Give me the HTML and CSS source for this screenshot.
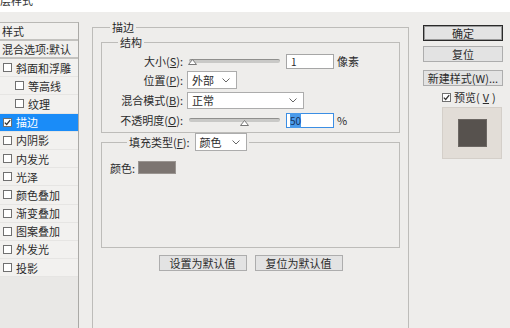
FILE: index.html
```html
<!DOCTYPE html>
<html lang="zh-CN">
<head>
    <meta charset="UTF-8">
    <title>图层样式</title>
    <link rel="stylesheet" href="styles.css">
</head>
<body>

    <div class="titlebar"><span>层样式</span></div>

    <div class="dialog">
        <aside class="style-list">
            <div class="head">样式</div>
            <div class="blend">混合选项:默认</div>
            <div class="item"><span class="check"></span>斜面和浮雕</div>
            <div class="item sub"><span class="check"></span>等高线</div>
            <div class="item sub"><span class="check"></span>纹理</div>
            <div class="item on"><span class="check"><svg width="7" height="7" viewBox="0 0 7 7"><path d="M0.8 3.6 L2.7 5.5 L6.2 1.2" fill="none" stroke="#333" stroke-width="1.3"/></svg></span>描边</div>
            <div class="item"><span class="check"></span>内阴影</div>
            <div class="item"><span class="check"></span>内发光</div>
            <div class="item"><span class="check"></span>光泽</div>
            <div class="item"><span class="check"></span>颜色叠加</div>
            <div class="item"><span class="check"></span>渐变叠加</div>
            <div class="item"><span class="check"></span>图案叠加</div>
            <div class="item"><span class="check"></span>外发光</div>
            <div class="item"><span class="check"></span>投影</div>
        </aside>

        <main class="panel">
            <fieldset class="group outer">
                <legend>描边</legend>

                <fieldset class="group struct">
                    <legend>结构</legend>
                    <div class="form-row">
                        <label>大小(<u>S</u>):</label>
                        <div class="controls">
                            <div class="slider"><div class="track"></div><svg class="thumb at-min" width="9" height="6" viewBox="0 0 9 6"><path d="M4.5 0.5 L8.5 5.5 L0.5 5.5 Z" fill="#fff" stroke="#777"/></svg></div>
                            <div class="field">1</div>
                            <span class="unit">像素</span>
                        </div>
                    </div>
                    <div class="form-row">
                        <label>位置(<u>P</u>):</label>
                        <div class="controls">
                            <div class="select short"><span>外部</span><svg width="8" height="5" viewBox="0 0 8 5"><path d="M0.5 0.5 L4 4 L7.5 0.5" fill="none" stroke="#666"/></svg></div>
                        </div>
                    </div>
                    <div class="form-row">
                        <label>混合模式(<u>B</u>):</label>
                        <div class="controls">
                            <div class="select wide"><span>正常</span><svg width="8" height="5" viewBox="0 0 8 5"><path d="M0.5 0.5 L4 4 L7.5 0.5" fill="none" stroke="#666"/></svg></div>
                        </div>
                    </div>
                    <div class="form-row">
                        <label>不透明度(<u>O</u>):</label>
                        <div class="controls">
                            <div class="slider"><div class="track"></div><svg class="thumb at-half" width="9" height="6" viewBox="0 0 9 6"><path d="M4.5 0.5 L8.5 5.5 L0.5 5.5 Z" fill="#fff" stroke="#777"/></svg></div>
                            <div class="field focus"><span class="sel">50</span></div>
                            <span class="unit">%</span>
                        </div>
                    </div>
                </fieldset>

                <fieldset class="group fill">
                    <legend>
                        <label>填充类型(<u>F</u>):</label>
                        <div class="select fill-type"><span>颜色</span><svg width="8" height="5" viewBox="0 0 8 5"><path d="M0.5 0.5 L4 4 L7.5 0.5" fill="none" stroke="#666"/></svg></div>
                    </legend>
                    <div class="color-row">
                        <span>颜色:</span>
                        <span class="swatch"></span>
                    </div>
                </fieldset>

                <div class="defaults">
                    <button>设置为默认值</button>
                    <button>复位为默认值</button>
                </div>
            </fieldset>
        </main>

        <div class="actions">
            <button class="primary">确定</button>
            <button class="reset">复位</button>
            <button class="new-style">新建样式(W)...</button>
            <div class="preview-check"><span class="check"><svg width="7" height="7" viewBox="0 0 7 7"><path d="M0.8 3.6 L2.7 5.5 L6.2 1.2" fill="none" stroke="#333" stroke-width="1.3"/></svg></span>预览(<u>V</u>)</div>
            <div class="preview"><div class="preview-square"></div></div>
        </div>
    </div>

</body>
</html>
```

FILE: styles.css
```css
* {
    box-sizing: border-box;
}
body {
    margin: 0;
    width: 510px;
    height: 328px;
    overflow: hidden;
    background: #eeedeb;
    font-family: "Noto Sans CJK SC", "Noto Sans", sans-serif;
    font-size: 11px;
    color: #2b2b2b;
}
u {
    text-decoration: underline;
}
.titlebar {
    height: 12px;
    background: #fff;
    overflow: hidden;
}
.titlebar span {
    display: block;
    margin-top: -7px;
    font-size: 11px;
    line-height: 14px;
    color: #333;
}
.dialog {
    display: flex;
    height: 316px;
    overflow: hidden;
}

/* left list */
.style-list {
    width: 79px;
    flex: none;
    margin-top: 10px;
    border-top: 1px solid #b9b8b5;
    border-right: 1px solid #aaa9a6;
    background: #e9e8e6;
    overflow: hidden;
}
.head,
.blend {
    height: 18px;
    line-height: 16px;
    padding-left: 2px;
    background: #f1f0ee;
    border-bottom: 2px solid #c3c2bf;
    white-space: nowrap;
}
.item {
    height: 18.2px;
    display: flex;
    align-items: center;
    gap: 4px;
    padding-left: 3px;
    background: #f2f1ef;
    border-bottom: 1px solid #e6e5e3;
    white-space: nowrap;
}
.item.sub {
    padding-left: 15px;
}
.item.on {
    background: #1a8cf8;
    color: #fff;
}
.check {
    width: 9px;
    height: 9px;
    flex: none;
    border: 1px solid #707070;
    background: #fff;
    display: flex;
    align-items: center;
    justify-content: center;
}

/* main panel */
.panel {
    margin-left: 13px;
    padding-top: 9px;
    width: 317px;
    flex: none;
}
fieldset.group {
    margin: 0;
    min-width: 0;
    border: 1px solid #bdbcb9;
}
fieldset.group > legend {
    padding: 0 2px;
    line-height: 13px;
}
.outer {
    height: 320px;
    padding: 2px 8px 0 8px;
}
.outer > legend {
    margin-left: 9px;
}
.struct {
    padding: 3px 8px 2px 8px;
}
.struct > legend {
    margin-left: 8px;
}
.form-row {
    display: grid;
    grid-template-columns: 73px 1fr;
    column-gap: 4px;
    align-items: center;
    height: 20px;
}
.form-row:first-of-type {
    height: 18px;
}
.form-row > label {
    text-align: right;
    white-space: nowrap;
}
.controls {
    display: flex;
    align-items: center;
}
.slider {
    position: relative;
    width: 91px;
    height: 12px;
    margin-left: 2px;
    display: flex;
    align-items: center;
}
.track {
    width: 100%;
    height: 4px;
    border-radius: 2px;
    background: #c9c9c7;
    border-top: 1px solid #8f8f8d;
}
.thumb {
    position: absolute;
    top: 6px;
}
.thumb.at-min {
    left: -1px;
    top: 4px;
}
.thumb.at-half {
    left: 51px;
}
.field {
    width: 48px;
    height: 15px;
    margin-left: 6px;
    padding-left: 4px;
    border: 1px solid #a6a6a6;
    background: #fff;
    font-size: 10px;
    line-height: 13px;
}
.field.focus {
    border-color: #3b8ee4;
    padding-left: 3px;
}
.sel {
    background: #4a9beb;
    color: #17345e;
}
.unit {
    margin-left: 3px;
}
.select {
    height: 18px;
    display: flex;
    align-items: center;
    justify-content: space-between;
    padding: 0 6px 0 4px;
    border: 1px solid #acacac;
    background: #fff;
}
.select.short {
    width: 50px;
}
.select.wide {
    width: 117px;
    height: 17px;
}

/* fill type group */
.fill {
    margin: 5px 1px 0 1px;
    padding: 10px 8px 73px 8px;
}
.fill > legend {
    margin-left: 17px;
    display: flex;
    align-items: center;
    gap: 5px;
    line-height: 18px;
}
.select.fill-type {
    width: 52px;
}
.color-row {
    display: flex;
    align-items: center;
    height: 13px;
}
.swatch {
    width: 38px;
    height: 13px;
    margin-left: 3px;
    background: #7c7571;
    border: 1px solid #9a9591;
}
.defaults {
    display: flex;
    justify-content: center;
    gap: 8px;
    margin-top: 7px;
}
button {
    font-family: inherit;
    font-size: 11px;
    color: #2b2b2b;
    height: 16px;
    padding: 0;
    line-height: 14px;
    border: 1px solid #adadad;
    background: #e3e3e3;
    border-radius: 0;
}
.defaults button {
    width: 88px;
}

/* right column */
.actions {
    width: 80px;
    flex: none;
    margin-left: 14px;
    margin-top: 13px;
    display: flex;
    flex-direction: column;
}
.actions button {
    width: 80px;
}
.actions .primary {
    border-color: #2a2a2a;
    box-shadow: inset 0 0 0 1px #9a9a9a;
}
.actions .reset {
    margin-top: 5px;
}
.actions .new-style {
    margin-top: 8px;
}
.preview-check {
    display: flex;
    align-items: center;
    gap: 3px;
    margin-top: 4px;
    margin-left: 19px;
    height: 14px;
}
.preview {
    width: 60px;
    height: 52px;
    margin-top: 3px;
    margin-left: 19px;
    background: #e2ddd7;
    border: 1px solid #d4cfc9;
    display: flex;
    align-items: center;
    justify-content: center;
}
.preview-square {
    width: 29px;
    height: 28px;
    background: #57524e;
    border: 1px solid #6c6763;
}
```
